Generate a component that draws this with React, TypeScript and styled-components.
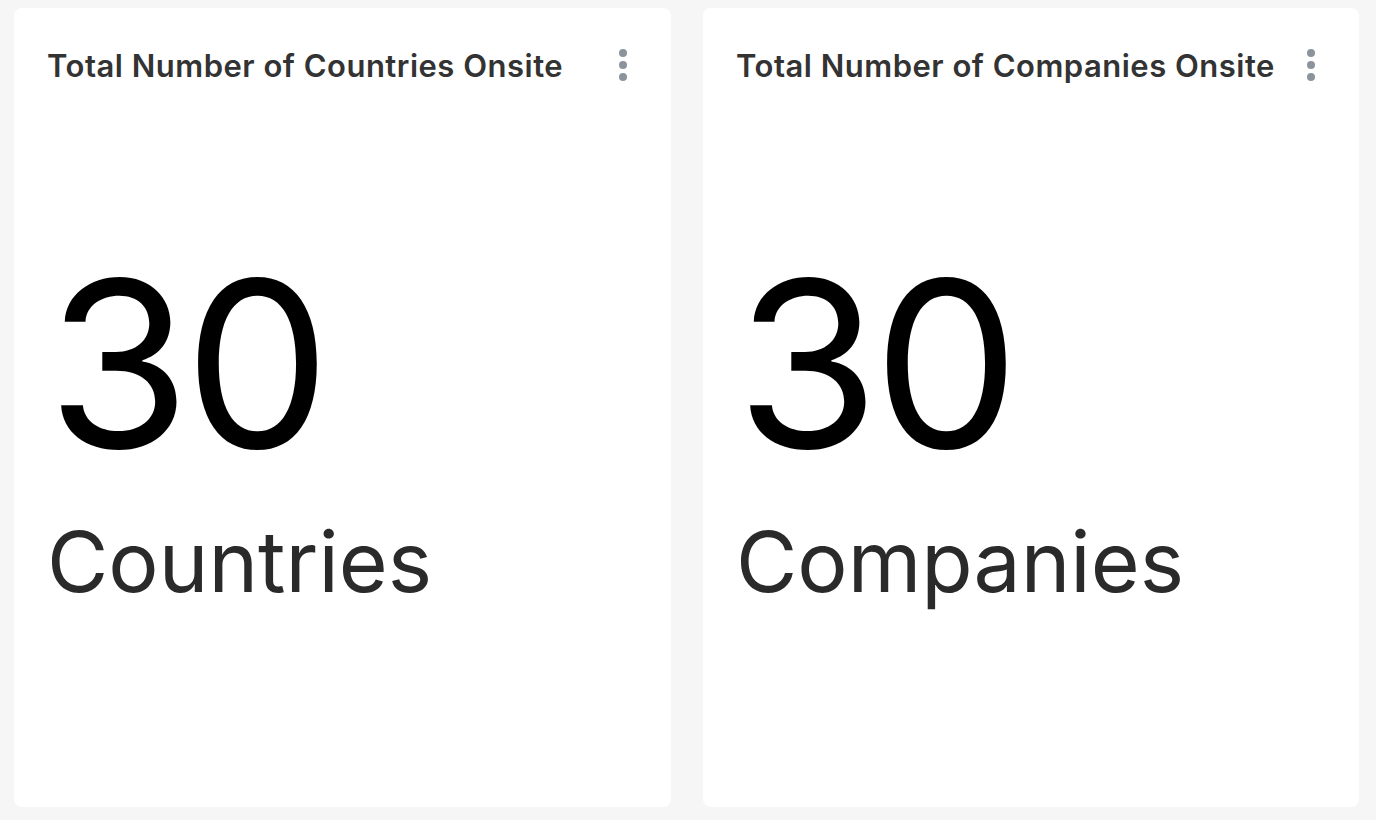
import styled, { createGlobalStyle } from "styled-components"

const GlobalStyle = createGlobalStyle`
  html, body {
    margin: 0;
    padding: 0;
    background: #f6f6f6;
    font-family: Inter, "Noto Sans", sans-serif;
  }
`

const Board = styled.div`
  display: grid;
  grid-template-columns: 657px 656px;
  gap: 32px;
  padding: 8px 17px 13px 14px;
  height: 820px;
  box-sizing: border-box;
`

const Card = styled.div`
  display: flex;
  flex-direction: column;
  background: #ffffff;
  border-radius: 8px;
  padding: 0 33px;
`

const CardHeader = styled.div`
  display: flex;
  justify-content: space-between;
  align-items: center;
  height: 114px;
`

const Title = styled.h3`
  margin: 0;
  font-size: 31px;
  font-weight: 600;
  color: #333333;
  letter-spacing: 0.5px;
  white-space: nowrap;
`

const MenuButton = styled.button`
  display: flex;
  flex-direction: column;
  gap: 4px;
  padding: 0;
  margin-right: 11px;
  border: none;
  background: none;
  cursor: pointer;
`

const Dot = styled.span`
  width: 8px;
  height: 8px;
  border-radius: 50%;
  background: #8b949c;
`

const Value = styled.div`
  margin-top: 126px;
  font-size: 232px;
  font-weight: 400;
  line-height: 1;
  color: #000000;
  letter-spacing: -6px;
`

const Unit = styled.div`
  margin-top: 40px;
  font-size: 84px;
  font-weight: 400;
  line-height: 1;
  color: #2a2a2a;
`

interface IStat {
  title: string
  value: number
  unit: string
}

function StatCard({ title, value, unit }: IStat) {
  return (
    <Card>
      <CardHeader>
        <Title>{title}</Title>
        <MenuButton aria-label="More options">
          <Dot />
          <Dot />
          <Dot />
        </MenuButton>
      </CardHeader>
      <Value>{value}</Value>
      <Unit>{unit}</Unit>
    </Card>
  )
}

export default function App() {
  const stats: IStat[] = [
    { title: "Total Number of Countries Onsite", value: 30, unit: "Countries" },
    { title: "Total Number of Companies Onsite", value: 30, unit: "Companies" },
  ]

  return (
    <>
      <GlobalStyle />
      <Board>
        {stats.map(s => (
          <StatCard key={s.title} {...s} />
        ))}
      </Board>
    </>
  )
}
